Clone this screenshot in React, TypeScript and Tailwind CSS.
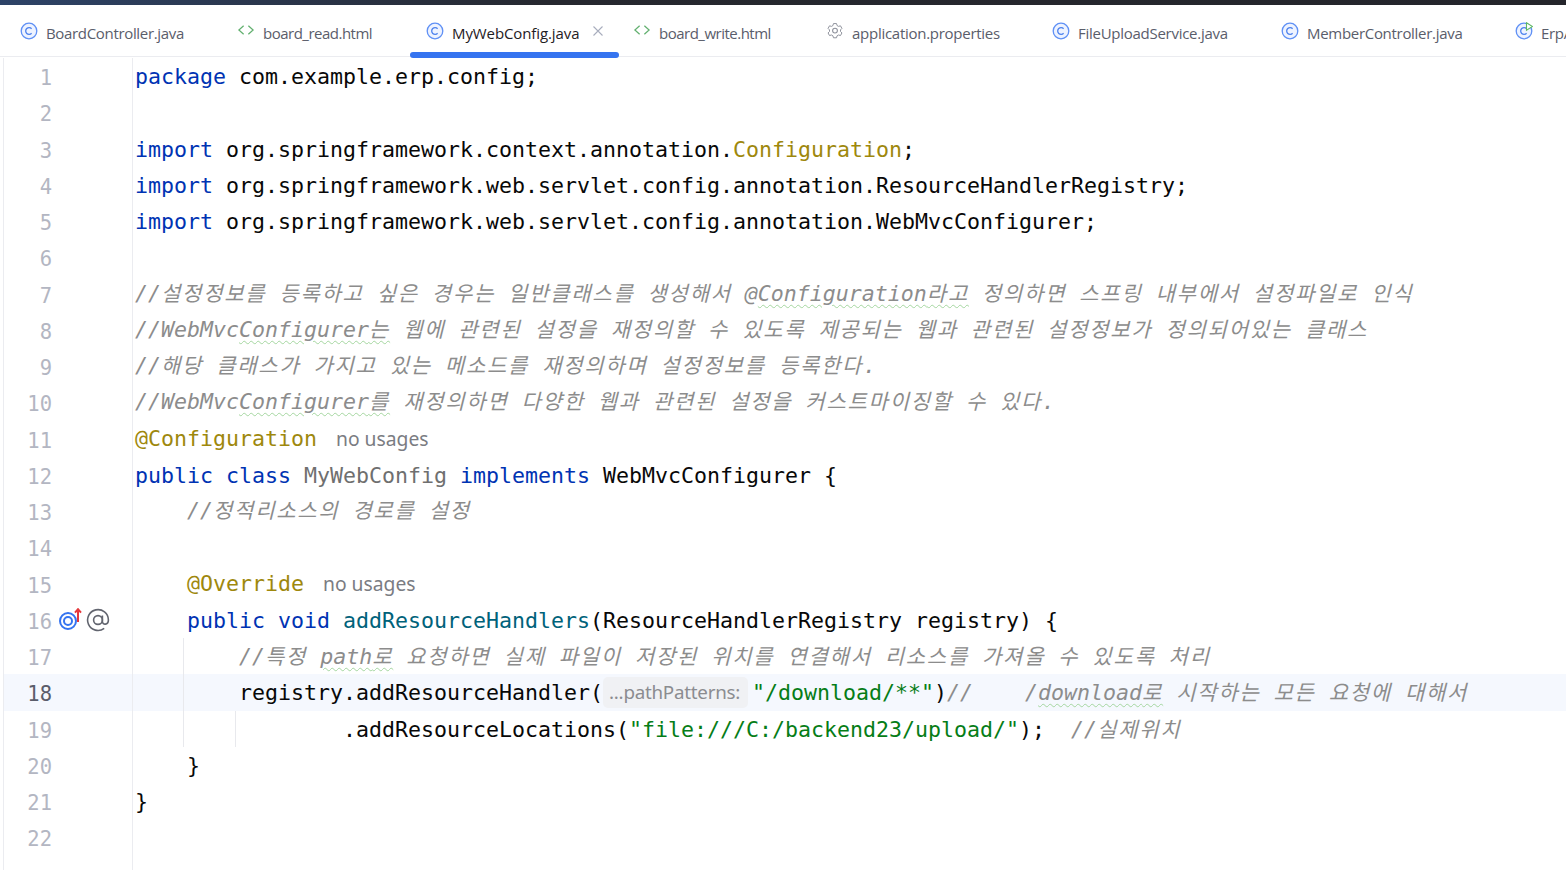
type Tone = "kw" | "txt" | "cm" | "ann" | "str" | "fn" | "dim" | "warn";
type Seg = [Tone, string] | { hint: string; cls: string };

const toneClass: Record<Tone, string> = {
  kw: "text-[#0033b3]",
  txt: "text-[#080808]",
  cm: "text-[#8c8c8c] italic",
  ann: "text-[#9e880d]",
  str: "text-[#067d17]",
  fn: "text-[#00627a]",
  dim: "text-[#6f6f6f]",
  warn: "text-[#8c8c8c] italic underline decoration-wavy decoration-[#a5d6a0] decoration-1 underline-offset-[3px]",
};

const tabs = [
  { name: "BoardController.java", icon: "c", w: "w-[217px]", pl: "pl-[17px]", tr: "tracking-[-0.33px]" },
  { name: "board_read.html", icon: "html", w: "w-[190px]", pl: "pl-[17px]", tr: "tracking-[-0.5px]" },
  { name: "MyWebConfig.java", icon: "c", w: "w-[209px]", pl: "pl-[16px]", tr: "tracking-[-0.1px]", active: true },
  { name: "board_write.html", icon: "html", w: "w-[193px]", pl: "pl-[14px]", tr: "tracking-[-0.5px]" },
  { name: "application.properties", icon: "gear", w: "w-[226px]", pl: "pl-[14px]", tr: "tracking-[-0.27px]" },
  { name: "FileUploadService.java", icon: "c", w: "w-[229px]", pl: "pl-[14px]", tr: "tracking-[-0.27px]" },
  { name: "MemberController.java", icon: "c", w: "w-[233px]", pl: "pl-[14px]", tr: "tracking-[-0.3px]" },
  { name: "ErpApplication.java", icon: "run", w: "w-[120px]", pl: "pl-[15px]", tr: "tracking-[-0.3px]" },
];

// these rows sit a pixel higher than the plain code rows
const raisedRows = [7, 8, 9, 10, 11, 13, 15];

const lines: Seg[][] = [
  [["kw", "package"], ["txt", " com.example.erp.config;"]],
  [],
  [["kw", "import"], ["txt", " org.springframework.context.annotation."], ["ann", "Configuration"], ["txt", ";"]],
  [["kw", "import"], ["txt", " org.springframework.web.servlet.config.annotation.ResourceHandlerRegistry;"]],
  [["kw", "import"], ["txt", " org.springframework.web.servlet.config.annotation.WebMvcConfigurer;"]],
  [],
  [["cm", "//설정정보를 등록하고 싶은 경우는 일반클래스를 생성해서 @"], ["warn", "Configuration라고"], ["cm", " 정의하면 스프링 내부에서 설정파일로 인식"]],
  [["cm", "//WebMvc"], ["warn", "Configurer는"], ["cm", " 웹에 관련된 설정을 재정의할 수 있도록 제공되는 웹과 관련된 설정정보가 정의되어있는 클래스"]],
  [["cm", "//해당 클래스가 가지고 있는 메소드를 재정의하며 설정정보를 등록한다."]],
  [["cm", "//WebMvc"], ["warn", "Configurer를"], ["cm", " 재정의하면 다양한 웹과 관련된 설정을 커스트마이징할 수 있다."]],
  [["ann", "@Configuration"], { hint: "no usages", cls: "ml-[19px]" }],
  [["kw", "public class"], ["txt", " "], ["dim", "MyWebConfig"], ["txt", " "], ["kw", "implements"], ["txt", " WebMvcConfigurer {"]],
  [["cm", "    //정적리소스의 경로를 설정"]],
  [],
  [["ann", "    @Override"], { hint: "no usages", cls: "ml-[19px]" }],
  [["kw", "    public void"], ["txt", " "], ["fn", "addResourceHandlers"], ["txt", "(ResourceHandlerRegistry registry) {"]],
  [["cm", "        //특정 "], ["warn", "path로"], ["cm", " 요청하면 실제 파일이 저장된 위치를 연결해서 리소스를 가져올 수 있도록 처리"]],
  [["txt", "        registry.addResourceHandler("], { hint: "...pathPatterns:", cls: "box" }, ["str", "\"/download/**\""], ["txt", ")"], ["cm", "//    /"], ["warn", "download로"], ["cm", " 시작하는 모든 요청에 대해서"]],
  [["txt", "                .addResourceLocations("], ["str", "\"file:///C:/backend23/upload/\""], ["txt", ");"], ["cm", "  //실제위치"]],
  [["txt", "    }"]],
  [["txt", "}"]],
  [],
];

// hangul gets its own span: it runs 21px per char here, not the 13px cell of the latin text
function splitKo(text: string) {
  return text.split(/([\uac00-\ud7a3]+)/).map((part, i) =>
    /[\uac00-\ud7a3]/.test(part) ? (
      <span key={i} className="font-['Noto_Sans_CJK_KR',sans-serif] text-[21px] leading-none tracking-[1.75px]">
        {part}
      </span>
    ) : (
      part
    ),
  );
}

function TabIcon({ kind }: { kind: string }) {
  if (kind === "html") {
    return (
      <svg width="19" height="14" viewBox="0 0 19 14" fill="none" stroke="#62b06f" strokeWidth="1.3">
        <path d="M7 2.5 2 7l5 4.5M12 2.5 17 7l-5 4.5" transform="translate(0 -1)" />
      </svg>
    );
  }
  if (kind === "gear") {
    return (
      <svg width="18" height="18" viewBox="0 0 18 18" fill="none" stroke="#8f929c" strokeWidth="1.1">
        <path d="M7.3 1.3h3.4l.6 2.2 1.6.9 2.2-.6 1.6 2.9-1.6 1.6v1.8l1.6 1.6-1.6 2.9-2.2-.6-1.6.9-.6 2.2H7.3l-.6-2.2-1.6-.9-2.2.6-1.6-2.9 1.6-1.6V8.3L1.3 6.7l1.6-2.9 2.2.6 1.6-.9z" transform="translate(.9 .4) scale(.9)" />
        <circle cx="9" cy="8.6" r="2.4" />
      </svg>
    );
  }
  return (
    <svg width="18" height="18" viewBox="0 0 18 18" fill="none">
      <circle cx="9" cy="9" r="7.8" fill="#eef3ff" stroke="#5f90f5" strokeWidth="1.3" />
      <path d="M11.6 6.7A3.4 3.4 0 1 0 11.6 11.3" stroke="#4d82ee" strokeWidth="1.3" />
      {kind === "run" && <path d="M11.5 .8 17.5 4.5 11.5 8.2z" fill="#fff" stroke="#5fb865" strokeWidth="1.1" />}
    </svg>
  );
}

function Tab({ tab }: { tab: (typeof tabs)[number] }) {
  return (
    <div className={`relative flex h-full shrink-0 items-center gap-[8px] ${tab.w} ${tab.pl}`}>
      <span className="flex w-[18px] justify-center">
        <TabIcon kind={tab.icon} />
      </span>
      <span className={`mt-[5px] whitespace-nowrap font-['Open_Sans',sans-serif] text-[15px] ${tab.tr} ${tab.active ? "text-[#1f2024]" : "text-[#5a5d6b]"}`}>
        {tab.name}
      </span>
      {tab.active && (
        <>
          <svg className="ml-[5px]" width="12" height="12" viewBox="0 0 12 12" stroke="#a8adbd" strokeWidth="1.1">
            <path d="M1.5 1.5l9 9M10.5 1.5l-9 9" />
          </svg>
          <div className="absolute bottom-[-1px] left-0 right-0 h-[6px] rounded-full bg-[#3574f0]" />
        </>
      )}
    </div>
  );
}

function GutterIcons() {
  return (
    <div className="absolute left-[55px] top-[6px] flex items-start">
      <svg width="24" height="24" viewBox="0 0 24 24" fill="none">
        <circle cx="9" cy="13" r="8" stroke="#3574f0" strokeWidth="2" />
        <circle cx="9" cy="13" r="4" stroke="#3574f0" strokeWidth="2" />
        <path d="M19 14V1.5M16 4.6 19 1.2l3 3.4" stroke="#e5383b" strokeWidth="2" />
      </svg>
      <svg className="ml-[3px]" width="24" height="24" viewBox="0 0 24 24" fill="none" stroke="#62656f" strokeWidth="1.6">
        <circle cx="12" cy="12" r="4.4" />
        <path d="M16.4 7.6v6c0 3.6 6 3.6 6-1.6a10.4 10.4 0 1 0-4.2 8.4" />
      </svg>
    </div>
  );
}

function Row({ segs, n }: { segs: Seg[]; n: number }) {
  const current = n === 18;
  const rendered = segs.map((s, i) => {
    if (Array.isArray(s)) {
      return (
        <span key={i} className={toneClass[s[0]]}>
          {splitKo(s[1])}
        </span>
      );
    }
    return s.cls === "box" ? (
      <span key={i} className="mr-[4px] inline-block h-[31px] w-[145px] rounded-[5px] bg-[#f0f1f4] px-[6px] align-[1px] font-['Noto_Sans',sans-serif] text-[18.8px] leading-[31px] tracking-[-0.25px] text-[#8b8c90]">
        {s.hint}
      </span>
    ) : (
      <span key={i} className={`${s.cls} font-['Noto_Sans',sans-serif] text-[19.3px] text-[#7a7c82]`}>
        {s.hint}
      </span>
    );
  });

  return (
    <div className={`flex h-[36.25px] shrink-0 ${current ? "bg-[#f5f8fe]" : ""}`}>
      <div className="relative w-[129px] shrink-0 border-r border-[#ebecf0]">
        <span className={`absolute right-[80px] top-[2px] text-[20.5px] leading-[36.25px] ${current ? "text-[#5a5d6b]" : "text-[#b3b6c2]"}`}>{n}</span>
        {n === 16 && <GutterIcons />}
      </div>
      <div className="relative flex-1 whitespace-pre pl-[2px] leading-[36.25px]">
        {n >= 17 && n <= 19 && <div className="absolute left-[50px] top-0 h-full border-l border-[#e8e9ed]" />}
        {n === 19 && <div className="absolute left-[102px] top-0 h-full border-l border-[#e8e9ed]" />}
        <div className={`relative ${raisedRows.includes(n) ? "" : "pt-[1px]"}`}>{rendered}</div>
      </div>
    </div>
  );
}

export default function App() {
  return (
    <div className="flex h-[870px] w-[1566px] flex-col overflow-hidden bg-white font-['DejaVu_Sans_Mono',monospace] text-[21.6px]">
      <div className="h-[5px] shrink-0 bg-gradient-to-r from-[#2d4368] via-[#26282f] via-[35%] to-[#24252b]" />
      <div className="flex h-[52px] shrink-0 items-center border-b border-[#ebecf0] pl-[3px]">
        <div className="flex h-[52px] w-full overflow-x-clip">
          {tabs.map((t) => (
            <Tab key={t.name} tab={t} />
          ))}
        </div>
      </div>
      <div className="flex min-h-0 flex-1 flex-col pt-[1px]">
        <div className="ml-[3px] flex h-full flex-col border-l border-[#ebecf0]">
          {lines.map((segs, i) => (
            <Row key={i} segs={segs} n={i + 1} />
          ))}
          <div className="w-[129px] flex-1 border-r border-[#ebecf0]" />
        </div>
      </div>
    </div>
  );
}
